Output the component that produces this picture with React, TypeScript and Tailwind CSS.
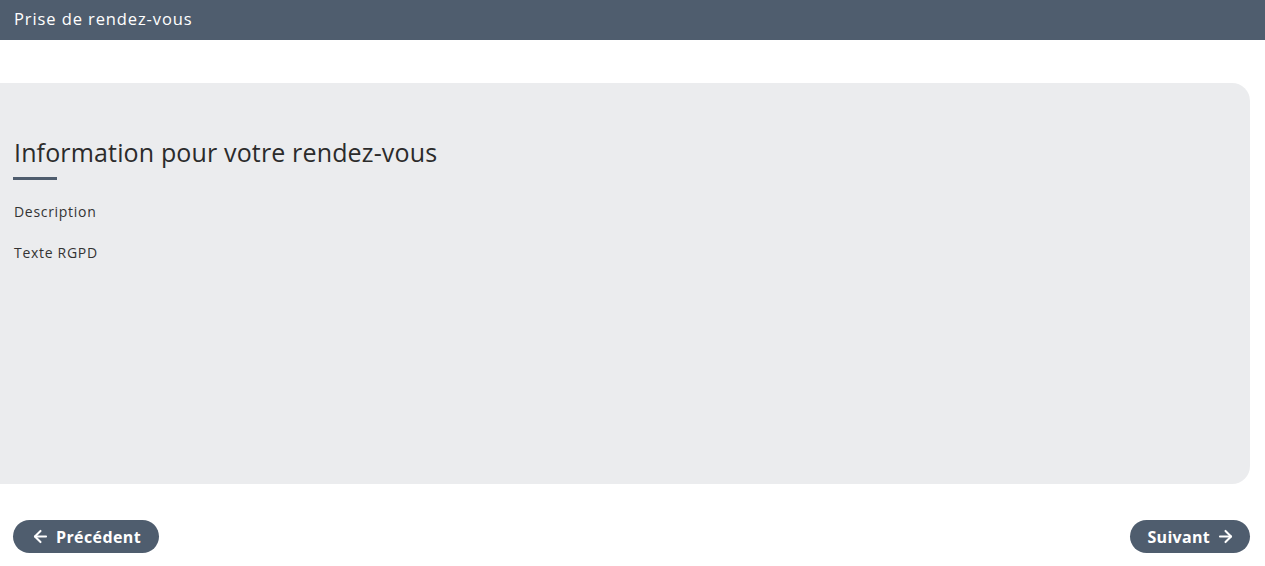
import { ArrowLeft, ArrowRight } from 'lucide-react';

export default function App() {
  return (
    <div className="min-h-[566px] bg-white font-['Open_Sans',sans-serif]">
      {/* bandeau */}
      <header className="h-10 bg-[#4f5d6e] flex items-center px-[14px] pb-[2px]">
        <h1 className="text-white text-[16.5px] leading-none tracking-[0.9px]">Prise de rendez-vous</h1>
      </header>

      <main className="pt-[43px] pr-[15px]">
        {/* carte d'information */}
        <section className="h-[401px] bg-[#ebecee] rounded-r-[18px] px-[14px] pt-[54px]">
          <h2 className="text-[#2b2b2b] text-[25px] leading-[30px] tracking-[0.15px]">Information pour votre rendez-vous</h2>
          <div className="mt-[10px] w-[44px] h-[3px] bg-[#4f5d6e] -ml-px" />
          <p className="mt-[22px] text-[#333] text-[14px] leading-5 tracking-[0.7px]">Description</p>
          <p className="mt-[21px] text-[#333] text-[14px] leading-5 tracking-[0.7px]">Texte RGPD</p>
        </section>

        {/* navigation */}
        <div className="mt-[36px] pl-[13px] flex justify-between">
          <button className="h-[33px] px-[18px] rounded-full bg-[#4f5d6e] text-white font-bold text-[16px] tracking-[0.4px] flex items-center gap-[6px]">
            <ArrowLeft className="w-[19px] h-[19px]" strokeWidth={2.6} />
            Précédent
          </button>
          <button className="h-[33px] pl-[17px] pr-[15px] rounded-full bg-[#4f5d6e] text-white font-bold text-[16px] tracking-[0.3px] flex items-center gap-[6px]">
            Suivant
            <ArrowRight className="w-[19px] h-[19px]" strokeWidth={2.6} />
          </button>
        </div>
      </main>
    </div>
  );
}
